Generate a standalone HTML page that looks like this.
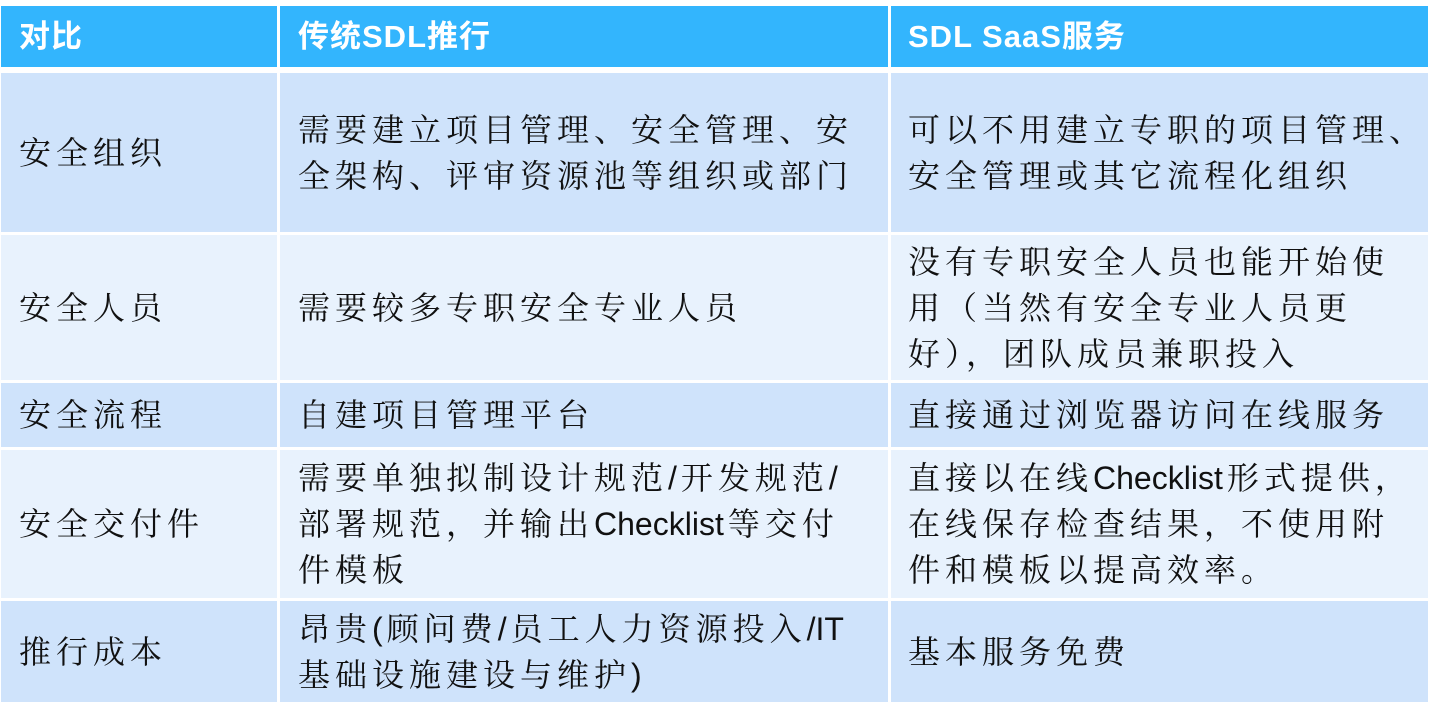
<!DOCTYPE html>
<html><head><meta charset="utf-8"><style>
body{margin:0;width:1430px;height:721px;background:#fff;position:relative;overflow:hidden;font-family:"Liberation Sans","Noto Serif CJK SC",serif;}
.c{position:absolute;display:flex;align-items:center;box-sizing:border-box;font-size:32px;line-height:46px;color:#111;letter-spacing:5px;white-space:nowrap;}
.h{background:#33b5fd;color:#fff;font-family:"Liberation Sans","Noto Sans CJK SC",sans-serif;font-weight:bold;font-size:31px;letter-spacing:1px;}
.d{background:#cfe3fb}.l{background:#e8f2fd}
.a{left:1px;width:276px;padding-left:18px}
.b{left:280px;width:608px;padding-left:18px}
.e{left:891px;width:537px;padding-left:17px}
.t{letter-spacing:0;margin-right:4px}
</style></head><body>
<div class="c h a" style="top:6px;height:61px">对比</div>
<div class="c h b" style="top:6px;height:61px">传统SDL推行</div>
<div class="c h e" style="top:6px;height:61px">SDL SaaS服务</div>

<div class="c d a" style="top:73px;height:159px">安全组织</div>
<div class="c d b" style="top:73px;height:159px"><div>需要建立项目管理、安全管理、安<br>全架构、评审资源池等组织或部门</div></div>
<div class="c d e" style="top:73px;height:159px"><div>可以不用建立专职的项目管理、<br>安全管理或其它流程化组织</div></div>

<div class="c l a" style="top:235px;height:145px">安全人员</div>
<div class="c l b" style="top:235px;height:145px">需要较多专职安全专业人员</div>
<div class="c l e" style="top:235px;height:145px"><div>没有专职安全人员也能开始使<br>用（当然有安全专业人员更<br>好），团队成员兼职投入</div></div>

<div class="c d a" style="top:383px;height:64px">安全流程</div>
<div class="c d b" style="top:383px;height:64px">自建项目管理平台</div>
<div class="c d e" style="top:383px;height:64px">直接通过浏览器访问在线服务</div>

<div class="c l a" style="top:450px;height:148px">安全交付件</div>
<div class="c l b" style="top:450px;height:148px"><div>需要单独拟制设计规范<span class="t">/</span>开发规范<span class="t">/</span><br>部署规范，并输出<span class="t">Checklist</span>等交付<br>件模板</div></div>
<div class="c l e" style="top:450px;height:148px"><div>直接以在线<span class="t">Checklist</span>形式提供，<br>在线保存检查结果，不使用附<br>件和模板以提高效率。</div></div>

<div class="c d a" style="top:601px;height:101px">推行成本</div>
<div class="c d b" style="top:601px;height:101px"><div>昂贵<span class="t">(</span>顾问费<span class="t">/</span>员工人力资源投入<span class="t">/IT</span><br>基础设施建设与维护<span class="t">)</span></div></div>
<div class="c d e" style="top:601px;height:101px">基本服务免费</div>
</body></html>
